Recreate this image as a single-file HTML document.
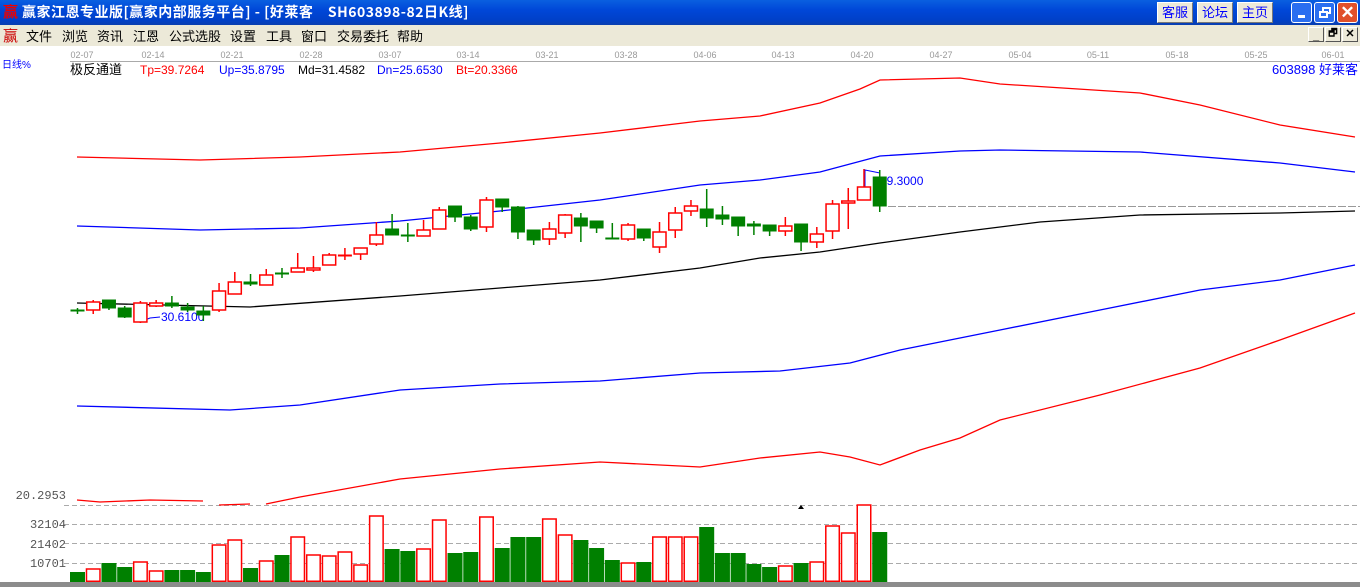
<!DOCTYPE html>
<html><head><meta charset="utf-8">
<style>
*{margin:0;padding:0;box-sizing:border-box}
body{width:1360px;height:587px;overflow:hidden;background:#fff;position:relative;font-family:"Liberation Sans","Noto Sans CJK SC",sans-serif}
#title{position:absolute;left:0;top:0;width:1360px;height:25px;background:linear-gradient(#0a5fe0,#0047d8 40%,#0040c8 80%,#0a3fb0);color:#fff;font:bold 14px "Noto Sans CJK SC","WenQuanYi Zen Hei",sans-serif;line-height:24px}
#menu{position:absolute;left:0;top:25px;width:1360px;height:21px;background:#ece9d8;font:13px "Noto Sans CJK SC",sans-serif;line-height:21px}
#menu span{position:absolute;top:0}
.b{position:absolute;top:2px;height:21px;background:#ece9d8;border:1px solid #fff;border-right-color:#777;border-bottom-color:#777;color:#00f;font:13px "Noto Sans CJK SC",sans-serif;text-align:center;line-height:18px}
.w{position:absolute;top:2px;width:21px;height:21px;border:1px solid #fff;border-radius:3px}
.sb{position:absolute;top:27px;width:16px;height:15px;background:#ece9d8;border:1px solid #fff;border-right-color:#555;border-bottom-color:#555;font:bold 11px sans-serif;text-align:center;line-height:12px}
</style></head><body>
<div id="title"><span style="position:absolute;left:3px;top:0;color:#e00;font-size:15px">赢</span><span style="position:absolute;left:22px;letter-spacing:0.5px">赢家江恩专业版[赢家内部服务平台] - [好莱客　SH603898-82日K线]</span></div>
<div class="b" style="left:1157px;width:36px">客服</div>
<div class="b" style="left:1197px;width:36px">论坛</div>
<div class="b" style="left:1237px;width:36px">主页</div>
<div class="w" style="left:1291px;background:#2a6ef0"><div style="position:absolute;left:6px;top:12px;width:7px;height:3px;background:#fff"></div></div>
<div class="w" style="left:1314px;background:#2a6ef0"><div style="position:absolute;left:7px;top:4px;width:9px;height:7px;border:2px solid #fff"></div><div style="position:absolute;left:4px;top:8px;width:9px;height:7px;border:2px solid #fff;background:#2a6ef0"></div></div>
<div class="w" style="left:1337px;background:#e0502a;color:#fff;font:bold 17px sans-serif;text-align:center;line-height:19px">✕</div>
<div id="menu"><span style="left:3px;color:#c00;font-size:15px">赢</span><span style="left:26px">文件</span><span style="left:62px">浏览</span><span style="left:97px">资讯</span><span style="left:133px">江恩</span><span style="left:169px">公式选股</span><span style="left:230px">设置</span><span style="left:266px">工具</span><span style="left:301px">窗口</span><span style="left:337px">交易委托</span><span style="left:397px">帮助</span></div>
<div class="sb" style="left:1308px;line-height:16px">_</div>
<div class="sb" style="left:1325px;font-size:10px">🗗</div>
<div class="sb" style="left:1342px">✕</div>
<svg id="c" style="position:absolute;left:0;top:46px" width="1360" height="541" viewBox="0 46 1360 541" font-family="Liberation Sans, Noto Sans CJK SC, sans-serif"></svg>
<script>
var s='';
function L(pts,col){s+='<polyline fill="none" stroke="'+col+'" stroke-width="1.3" points="'+pts+'"/>';}
s+='<line x1="70" y1="61.5" x2="1360" y2="61.5" stroke="#aaa"/>';
var d=[[82,'02-07'],[153,'02-14'],[232,'02-21'],[311,'02-28'],[390,'03-07'],[468,'03-14'],[547,'03-21'],[626,'03-28'],[705,'04-06'],[783,'04-13'],[862,'04-20'],[941,'04-27'],[1020,'05-04'],[1098,'05-11'],[1177,'05-18'],[1256,'05-25'],[1333,'06-01']];
d.forEach(function(a){s+='<text x="'+a[0]+'" y="58" font-size="9" fill="#999" text-anchor="middle">'+a[1]+'</text>';});
s+='<text x="2" y="68" font-size="10" fill="#00f">日线%</text>';
s+='<text x="70" y="74" font-size="13" fill="#000">极反通道</text>';
s+='<text x="140" y="74" font-size="12" fill="#f00">Tp=39.7264</text>';
s+='<text x="219" y="74" font-size="12" fill="#00f">Up=35.8795</text>';
s+='<text x="298" y="74" font-size="12" fill="#000">Md=31.4582</text>';
s+='<text x="377" y="74" font-size="12" fill="#00f">Dn=25.6530</text>';
s+='<text x="456" y="74" font-size="12" fill="#f00">Bt=20.3366</text>';
s+='<text x="1358" y="74" font-size="13" fill="#00f" text-anchor="end">603898 好莱客</text>';
[505,524,543,563].forEach(function(y){s+='<line x1="64" y1="'+(y+.5)+'" x2="1360" y2="'+(y+.5)+'" stroke="#aaa" stroke-dasharray="5,3"/>';});
[[499,'20.2953'],[528,'32104'],[548,'21402'],[567,'10701']].forEach(function(a){s+='<text x="66" y="'+a[0]+'" font-size="12" fill="#555" text-anchor="end" font-family="Liberation Mono,monospace">'+a[1]+'</text>';});
s+='<rect x="0" y="582" width="1360" height="5" fill="#8c8c8c"/>';
L('77,157 200,160 300,157 400,152 500,143 600,133 700,121 760,116 820,103 860,89 880,80 960,78 1000,84 1140,93 1200,105 1280,125 1355,137','#f00');
L('77,226 200,230 300,228 400,221 500,211 600,200 700,185 760,180 820,172 880,156 960,151 1000,150 1140,152 1280,163 1355,172','#00f');
L('77,303 250,307 400,296 500,288 600,280 700,268 760,258 820,252 880,243 960,232 1040,222 1140,215 1280,213 1355,211','#000');
L('77,406 230,410 300,405 400,390 500,384 600,381 700,373 780,371 850,363 900,350 1000,330 1100,310 1200,290 1280,280 1355,265','#00f');
L('77,500 100,502 150,500 203,501','#f00');
L('219,505 250,504','#f00');
L('266,504 300,497 400,479 500,469 600,462 700,467 760,458 820,452 850,457 880,465 920,450 960,438 1000,420 1100,395 1200,368 1280,340 1355,313','#f00');
s+='<line x1="888" y1="206.5" x2="1360" y2="206.5" stroke="#999" stroke-dasharray="8,2"/>';
s+='<polyline fill="none" stroke="#00f" points="865,187 865,170 880,173"/>';
s+='<text x="880" y="185" font-size="12" fill="#00f">39.3000</text>';
s+='<polyline fill="none" stroke="#00f" points="140,322 150,318 160,317"/>';
s+='<text x="161" y="321" font-size="12" fill="#00f">30.6100</text>';
var C=[[310,310,308,314,'g'],[302,310,300,314,'r'],[300,308,300,310,'g'],[308,317,306,318,'g'],[303,322,301,323,'r'],[303,306,300,307,'r'],[303,306,296,308,'g'],[307,310,303,312,'g'],[311,315,306,321,'g'],[291,310,283,312,'r'],[282,294,272,294,'r'],[282,284,274,286,'g'],[275,285,269,285,'r'],[273,273,268,278,'g'],[268,272,253,272,'r'],[268,270,256,272,'r'],[255,265,253,265,'r'],[255,255,248,260,'r'],[248,254,248,260,'r'],[235,244,222,246,'r'],[229,235,214,235,'g'],[235,236,223,242,'g'],[230,236,220,236,'r'],[210,229,207,229,'r'],[206,217,206,222,'g'],[217,229,215,231,'g'],[200,227,197,232,'r'],[199,207,199,212,'g'],[207,232,206,239,'g'],[230,240,230,245,'g'],[229,239,222,245,'r'],[215,233,214,238,'r'],[218,226,213,242,'g'],[221,228,221,233,'g'],[238,239,223,239,'g'],[225,239,223,241,'r'],[229,238,229,241,'g'],[232,247,222,253,'r'],[213,230,207,238,'r'],[206,211,200,216,'r'],[209,218,189,227,'g'],[215,219,206,225,'g'],[217,226,217,236,'g'],[224,226,221,235,'g'],[225,231,225,236,'g'],[226,231,217,236,'r'],[224,242,224,251,'g'],[234,242,227,248,'r'],[204,231,200,239,'r'],[201,203,188,229,'r'],[187,200,169,200,'r'],[177,206,170,212,'g']];
var V=[[572,'g'],[569,'r'],[563,'g'],[567,'g'],[562,'r'],[571,'r'],[570,'g'],[570,'g'],[572,'g'],[545,'r'],[540,'r'],[568,'g'],[561,'r'],[555,'g'],[537,'r'],[555,'r'],[556,'r'],[552,'r'],[565,'r'],[516,'r'],[549,'g'],[551,'g'],[549,'r'],[520,'r'],[553,'g'],[552,'g'],[517,'r'],[548,'g'],[537,'g'],[537,'g'],[519,'r'],[535,'r'],[540,'g'],[548,'g'],[560,'g'],[563,'r'],[562,'g'],[537,'r'],[537,'r'],[537,'r'],[527,'g'],[553,'g'],[553,'g'],[564,'g'],[567,'g'],[566,'r'],[563,'g'],[562,'r'],[526,'r'],[533,'r'],[505,'r'],[532,'g']];
for(var i=0;i<52;i++){
 var x=77.5+i*15.73, c=C[i], col=c[4]=='g'?'#008000':'#f00';
 var l=x-7,w=14;
 if(c[4]=='r'){
  s+='<line x1="'+x+'" y1="'+c[2]+'" x2="'+x+'" y2="'+c[0]+'" stroke="'+col+'" stroke-width="1.5"/>';
  s+='<line x1="'+x+'" y1="'+c[1]+'" x2="'+x+'" y2="'+c[3]+'" stroke="'+col+'" stroke-width="1.5"/>';
  if(c[1]-c[0]<1.5) s+='<rect x="'+l+'" y="'+(c[0]-0.5)+'" width="'+w+'" height="2" fill="'+col+'"/>';
  else s+='<rect x="'+(l+0.5)+'" y="'+c[0]+'" width="'+(w-1)+'" height="'+(c[1]-c[0])+'" fill="#fff" stroke="'+col+'" stroke-width="1.5"/>';
 } else {
  s+='<line x1="'+x+'" y1="'+c[2]+'" x2="'+x+'" y2="'+c[3]+'" stroke="'+col+'" stroke-width="1.5"/>';
  s+='<rect x="'+l+'" y="'+(c[0]-0.5)+'" width="'+w+'" height="'+Math.max(2,c[1]-c[0]+1)+'" fill="'+col+'"/>';
 }
 var v=V[i],vx=70+i*15.73;
 if(v[1]=='g') s+='<rect x="'+vx+'" y="'+v[0]+'" width="15" height="'+(582-v[0])+'" fill="#008000"/>';
 else s+='<rect x="'+(vx+0.75)+'" y="'+v[0]+'" width="13.5" height="'+(581.25-v[0])+'" fill="#fff" stroke="#f00" stroke-width="1.5"/>';
}
s+='<polygon points="798,509 801,505 804,509" fill="#000"/>';
document.getElementById('c').innerHTML=s;
</script>
</body></html>
